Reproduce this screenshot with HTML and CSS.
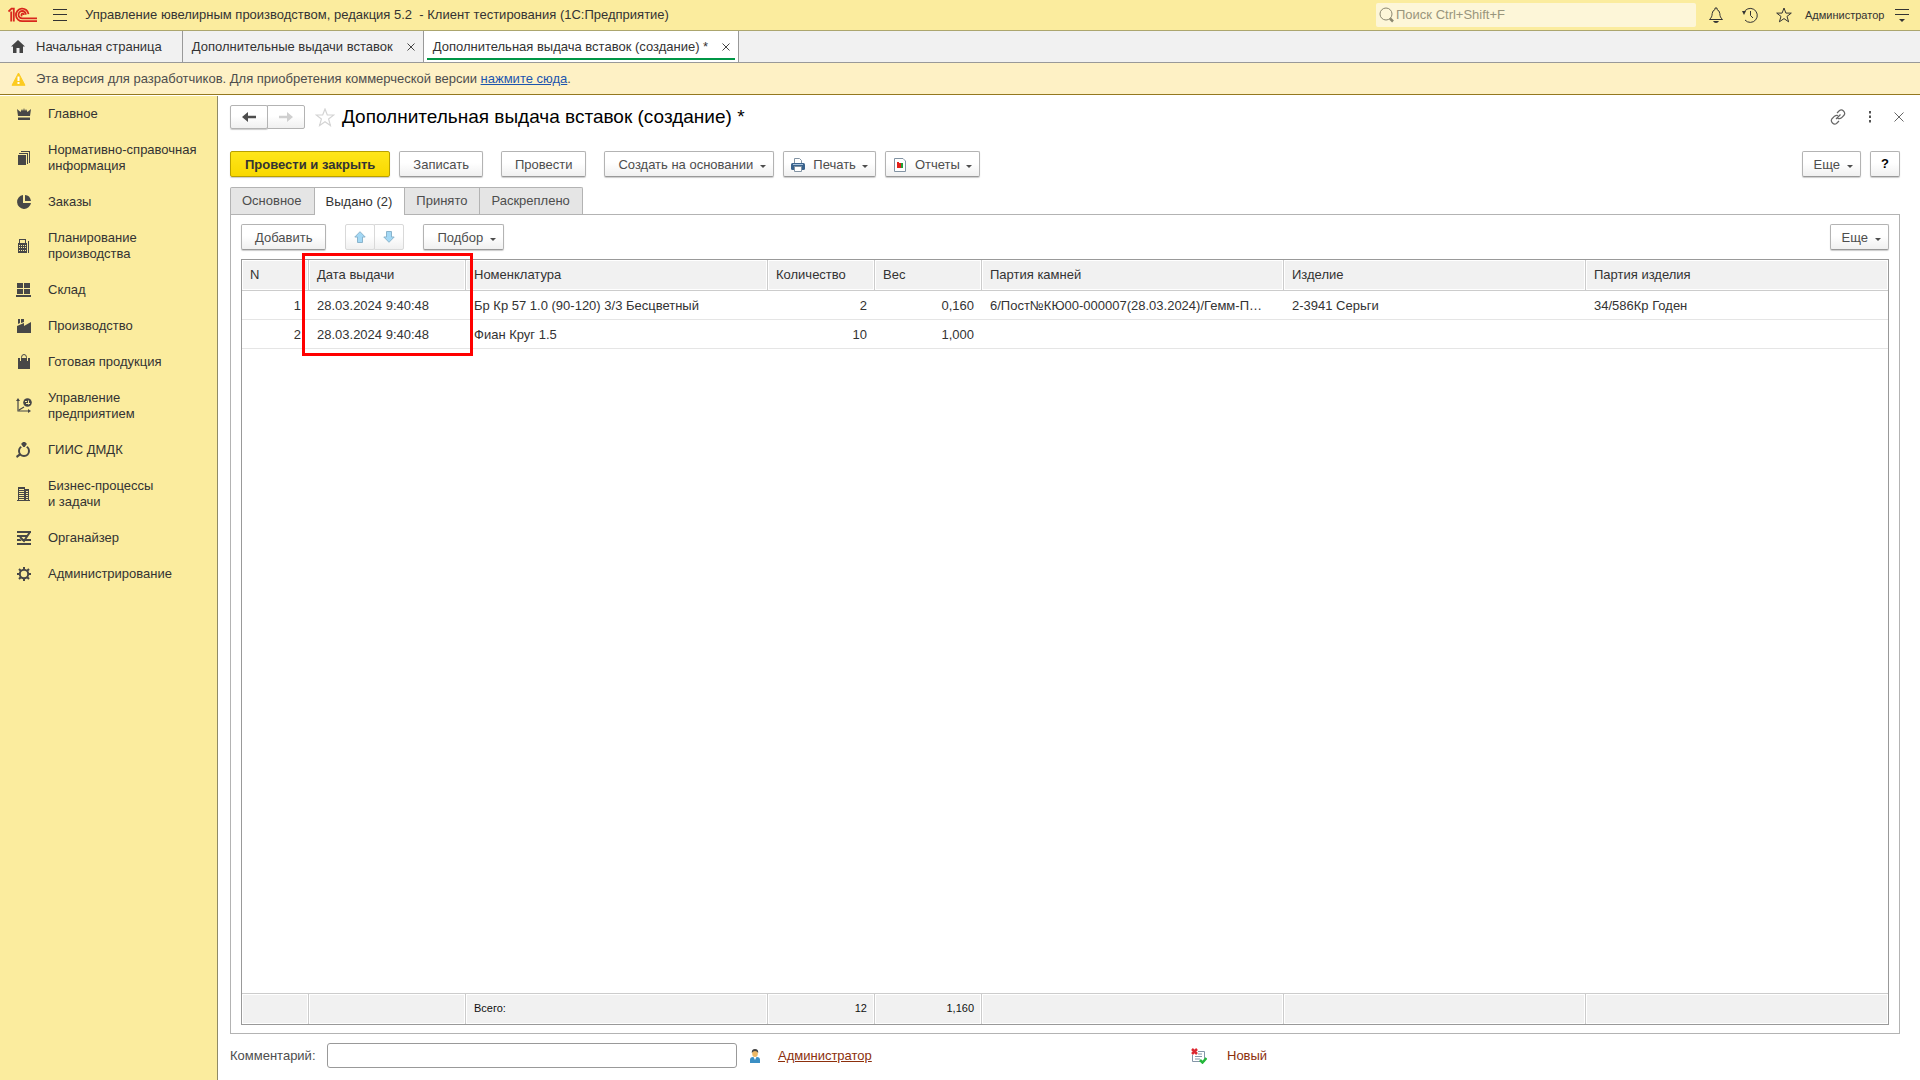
FILE: index.html
```html
<!DOCTYPE html>
<html lang="ru">
<head>
<meta charset="utf-8">
<title>Дополнительная выдача вставок (создание) *</title>
<link rel="stylesheet" href="styles.css">
</head>
<body>
<header class="topbar">
  <svg class="logo" width="30" height="16" viewBox="0 0 30 16" fill="none" stroke="#d9261c"><path stroke-width="1.8" d="M0.5 4.5L3.5 1.7H5.8V14.5M3.2 14.5V4.6"/><path stroke-width="1.8" d="M20.5 7.2A6.3 6.3 0 1 0 14.5 14.2H29M17.9 7.6A3.7 3.7 0 1 0 14.5 11.4H29M15.8 8A1.2 1.2 0 1 0 14.3 9"/></svg>
  <button class="icon-btn menu-btn" aria-label="Меню"><svg width="14" height="12" viewBox="0 0 14 12" stroke="#333" fill="none"><path d="M0 .5H14M0 5.5H14M0 11.5H14"/></svg></button>
  <div class="app-title">Управление ювелирным производством, редакция 5.2 &nbsp;- Клиент тестирования (1С:Предприятие)</div>
  <div class="search">
    <svg width="15" height="16" viewBox="0 0 15 16" fill="none" stroke="#8b8770"><circle cx="7" cy="7" r="6"/><path stroke-width="2.5" d="M11 11.5L14 14.5"/></svg>
    <input type="text" placeholder="Поиск Ctrl+Shift+F" aria-label="Поиск">
  </div>
  <div class="top-icons">
    <button class="icon-btn" aria-label="Оповещения"><svg width="16" height="16" viewBox="0 0 16 16" fill="none" stroke="#333"><path d="M1.5 12.5C3.5 10.5 4 9.5 4.2 6.5Q4.5 3.5 7 2.5V1H9V2.5Q11.5 3.5 11.8 6.5C12 9.5 12.5 10.5 14.5 12.5Z"/><path fill="#333" stroke="none" d="M5 14H11Q10 16 8 16T5 14"/></svg></button>
    <button class="icon-btn" aria-label="История"><svg width="16" height="16" viewBox="0 0 16 16" fill="none" stroke="#333"><path d="M1.7 6A7 7 0 1 1 3 13M8.5 4V8.5L11 11"/><path fill="#333" stroke="none" d="M0 4H4L2 8Z"/></svg></button>
    <button class="icon-btn" aria-label="Избранное"><svg width="16" height="16" viewBox="0 0 16 16" fill="none" stroke="#333"><path d="M8 1L9.9 6.1H15.3L11 9.4L12.6 14.8L8 11.6L3.4 14.8L5 9.4L.7 6.1H6.1Z"/></svg></button>
    <a class="user" href="#">Администратор</a>
    <button class="icon-btn" aria-label="Настройки"><svg width="14" height="14" viewBox="0 0 14 14" fill="none" stroke="#333"><path d="M0 1.5H14M0 6.5H14"/><path fill="#333" stroke="none" d="M4 11H10L7 14Z"/></svg></button>
  </div>
</header>

<nav class="windows">
  <a class="win home" href="#"><svg width="14" height="13" viewBox="0 0 14 13" fill="#444"><path d="M7 0L14 6.5H12V13H8.500V8H5.500V13H2V6.500H0Z"/></svg>Начальная страница</a>
  <div class="win"><a href="#">Дополнительные выдачи вставок</a><button class="icon-btn" aria-label="Закрыть"><svg width="8" height="8" viewBox="0 0 8 8" stroke="#444"><path d="M.5 .5L7.5 7.5M7.5 .5L.5 7.5"/></svg></button></div>
  <div class="win current"><a href="#">Дополнительная выдача вставок (создание) *</a><button class="icon-btn" aria-label="Закрыть"><svg width="8" height="8" viewBox="0 0 8 8" stroke="#444"><path d="M.5 .5L7.5 7.5M7.5 .5L.5 7.5"/></svg></button></div>
</nav>

<div class="notice">
  <svg width="15" height="14" viewBox="0 0 15 14"><path fill="#fccb20" stroke="#fccb20" stroke-linejoin="round" d="M7.5 1L14 13.300H1Z"/><path stroke="#fff" stroke-width="2" d="M7.5 4.5V9M7.5 10V12"/></svg>
  <p>Эта версия для разработчиков. Для приобретения коммерческой версии <a href="#">нажмите сюда</a>.</p>
</div>

<div class="workspace">
<nav class="sections">
  <a href="#"><svg width="16" height="16" viewBox="0 0 16 16"><path d="M1 3L4.5 6L6 3L7 5L8 2L9 5L10 3L11.5 6L15 3L14 10H2ZM2 11.5H14V14H2Z"/></svg>Главное</a>
  <a href="#"><svg width="16" height="16" viewBox="0 0 16 16"><path d="M2 5H10V15H2ZM3 3H12V14H11V4H3ZM5 1H14V13H13V2H5Z"/></svg>Нормативно-справочная информация</a>
  <a href="#"><svg width="16" height="16" viewBox="0 0 16 16"><path d="M7 1V9H15A7 7 0 1 1 7 1M9 1Q14 1 15 7H9Z"/></svg>Заказы</a>
  <a href="#"><svg width="16" height="16" viewBox="0 0 16 16"><path fill-rule="evenodd" d="M3 1H10V5H11V15H2V5H3ZM4 2V5H9V2ZM3 7V8H4V7ZM5 7V8H6V7ZM7 7V8H8V7ZM9 7V8H10V7ZM3 9V10H4V9ZM5 9V10H6V9ZM7 9V10H8V9ZM9 9V10H10V9ZM3 12V13H4V12ZM5 12V13H6V12ZM7 12V13H8V12ZM9 12V13H10V12ZM12 3H13V15H12Z"/></svg>Планирование производства</a>
  <a href="#"><svg width="16" height="16" viewBox="0 0 16 16"><path d="M1 1H7V6H1ZM8 1H14V6H8ZM1 7H7V12H1ZM8 7H14V12H8ZM0 13H15V15H0Z"/></svg>Склад</a>
  <a href="#"><svg width="16" height="16" viewBox="0 0 16 16"><path d="M2 1H4V5L2 6ZM5 1H8V4L5 5ZM1 8L8 5V8L15 4V15H1Z"/></svg>Производство</a>
  <a href="#"><svg width="16" height="16" viewBox="0 0 16 16"><path d="M2 4H14V15H2Z"/><path fill="none" stroke="#fbec9e" d="M4.500 7V3.500M11.500 7V3.500"/><path fill="none" stroke="#474747" d="M5.500 6V3.500Q5.500 .5 8 .5T10.500 3.500V6"/></svg>Готовая продукция</a>
  <a href="#"><svg width="16" height="16" viewBox="0 0 16 16"><path d="M2 0L0 3H4ZM15 13L12 11V15Z"/><path fill="none" stroke="#474747" stroke-width="1.2" d="M2 2V13H13M3 12L8 9"/><circle cx="11.5" cy="4.5" r="4.3"/><path fill="none" stroke="#fbec9e" d="M9 3.500H11M12.500 2.500V6.500M10 5.500H14"/></svg>Управление предприятием</a>
  <a href="#"><svg width="16" height="16" viewBox="0 0 16 16"><circle cx="8" cy="9" r="5" fill="none" stroke="#474747" stroke-width="2"/><path fill="none" stroke="#fbec9e" stroke-width="1.5" d="M4 2L8 7L12 2"/><path d="M5 2L7 0H9L11 2L8 5ZM0 14L4 11L5 13L1 16Z"/></svg>ГИИС ДМДК</a>
  <a href="#"><svg width="16" height="16" viewBox="0 0 16 16"><path fill-rule="evenodd" d="M2 1H9V3H13V14H14V15H1V14H2ZM3 3V4H8V3ZM3 5V6H8V5ZM3 7V8H8V7ZM3 9V10H8V9ZM3 11V12H8V11ZM3 13V14H8V13ZM10 5V6H12V5ZM10 7V8H12V7ZM10 9V10H12V9ZM10 11V12H12V11ZM10 13V14H12V13Z"/></svg>Бизнес-процессы<br>и задачи</a>
  <a href="#"><svg width="16" height="16" viewBox="0 0 16 16"><path d="M1 1H15V3H1ZM1 5H12V7H1ZM1 9H15V11H1ZM1 13H15V15H1Z"/><path fill="none" stroke="#fbec9e" d="M4 8L7 12L13 5"/><path fill="none" stroke="#474747" stroke-width="2" d="M4 7L8 11L14 2"/></svg>Органайзер</a>
  <a href="#"><svg width="16" height="16" viewBox="0 0 16 16"><circle cx="8" cy="8" r="4.2" fill="none" stroke="#474747" stroke-width="2"/><path fill="none" stroke="#474747" stroke-width="2" d="M8 1V4M8 12V15M1 8H4M12 8H15M3 3L5.2 5.2M10.8 10.8L13 13M13 3L10.8 5.2M5.2 10.8L3 13"/></svg>Администрирование</a>
</nav>

<main class="form">
  <div class="form-head">
    <div class="pair nav-pair">
      <button class="btn" aria-label="Назад"><svg width="14" height="10" viewBox="0 0 14 10"><path fill="#4d4d4d" d="M0 5L6 0V3.7H14V6.3H6V10Z"/></svg></button>
      <button class="btn" aria-label="Вперед" disabled><svg width="14" height="10" viewBox="0 0 14 10"><path fill="#cfcfcf" d="M14 5L8 0V3.7H0V6.3H8V10Z"/></svg></button>
    </div>
    <button class="icon-btn fav" aria-label="В избранное"><svg width="20" height="19" viewBox="0 0 20 19" fill="none" stroke="#d4d4d4" stroke-width="1.2"><path d="M10 1L12.3 7H18.8L13.6 11L15.4 17.5L10 13.7L4.6 17.5L6.4 11L1.2 7H7.7Z"/></svg></button>
    <h1>Дополнительная выдача вставок (создание) *</h1>
    <div class="head-tools">
      <button class="icon-btn" aria-label="Ссылка"><svg width="16" height="16" viewBox="0 0 16 16" fill="none" stroke="#666" stroke-width="1.2"><path d="M7 4L9.5 1.5Q11.5 0 13.5 2T14.2 6L11.5 8.8Q9.5 10.5 7.5 9M9 12L6.5 14.5Q4.5 16 2.5 14T1.8 10L4.5 7.2Q6 6 8 6.5M6 10L10.5 5.5"/></svg></button>
      <button class="icon-btn" aria-label="Еще действия"><svg width="4" height="12" viewBox="0 0 4 12" fill="#555"><path d="M1 0H3V2.5H1ZM1 4.5H3V7H1ZM1 9H3V11.5H1Z"/></svg></button>
      <button class="icon-btn" aria-label="Закрыть форму"><svg width="10" height="10" viewBox="0 0 10 10" stroke="#666"><path d="M.5 .5L9.5 9.5M9.5 .5L.5 9.5"/></svg></button>
    </div>
  </div>

  <div class="commands">
    <button class="btn primary">Провести и закрыть</button>
    <button class="btn">Записать</button>
    <button class="btn apart">Провести</button>
    <button class="btn drop apart">Создать на основании</button>
    <button class="btn drop pic"><svg width="14" height="14" viewBox="0 0 14 14"><path fill="#fff" stroke="#8293a3" d="M3.5 5V.5H8.5L10.5 2.5V5"/><rect y="5" width="14" height="7" rx="1.5" fill="#3a638d"/><path fill="#a9c3dc" d="M2 6H12V7H2Z"/><path fill="#fff" stroke="#8293a3" d="M3.5 8.5H10.5V13.5H3.5Z"/></svg>Печать</button>
    <button class="btn drop pic"><svg width="14" height="14" viewBox="0 0 14 14"><path fill="#fff" stroke="#8293a3" d="M1.5 .5H10L12.5 3V13.5H1.5Z"/><path fill="#e3211b" d="M4 4H6V10H4ZM6 5H8V10H6Z"/><path fill="#1fa33a" d="M8 5H10V10H8Z"/></svg>Отчеты</button>
    <button class="btn drop push">Еще</button>
    <button class="btn help">?</button>
  </div>

  <div class="tabs" role="tablist">
    <button role="tab">Основное</button>
    <button role="tab" class="active" aria-selected="true">Выдано (2)</button>
    <button role="tab">Принято</button>
    <button role="tab">Раскреплено</button>
  </div>

  <section class="panel">
    <div class="commands">
      <button class="btn">Добавить</button>
      <div class="pair move-pair">
        <button class="btn" aria-label="Вверх" disabled><svg width="12" height="12" viewBox="0 0 12 12"><path fill="#a3d8f5" stroke="#8ab4cc" d="M6 .7L11.2 6H8.5V11.5H3.5V6H.8Z"/></svg></button>
        <button class="btn" aria-label="Вниз" disabled><svg width="12" height="12" viewBox="0 0 12 12"><path fill="#a3d8f5" stroke="#8ab4cc" d="M6 11.3L11.2 6H8.5V.5H3.5V6H.8Z"/></svg></button>
      </div>
      <button class="btn drop">Подбор</button>
      <button class="btn drop push">Еще</button>
    </div>
    <div class="grid">
      <table>
        <colgroup><col class="c-n"><col class="c-date"><col><col class="c-num"><col class="c-num"><col><col><col></colgroup>
        <thead><tr><th>N</th><th>Дата выдачи</th><th>Номенклатура</th><th>Количество</th><th>Вес</th><th>Партия камней</th><th>Изделие</th><th>Партия изделия</th></tr></thead>
        <tbody>
          <tr><td class="num">1</td><td>28.03.2024 9:40:48</td><td>Бр Кр 57 1.0 (90-120) 3/3 Бесцветный</td><td class="num">2</td><td class="num">0,160</td><td>6/Пост№КЮ00-000007(28.03.2024)/Гемм-П…</td><td>2-3941 Серьги</td><td>34/586Кр Годен</td></tr>
          <tr><td class="num">2</td><td>28.03.2024 9:40:48</td><td>Фиан Круг 1.5</td><td class="num">10</td><td class="num">1,000</td><td></td><td></td><td></td></tr>
          <tr class="rest"><td colspan="8"></td></tr>
        </tbody>
        <tfoot><tr><td></td><td></td><td>Всего:</td><td class="num">12</td><td class="num">1,160</td><td></td><td></td><td></td></tr></tfoot>
      </table>
      <div class="highlight"></div>
    </div>
  </section>

  <footer class="form-foot">
    <label for="comment">Комментарий:</label>
    <input id="comment" type="text">
    <svg class="person" width="12" height="14" viewBox="0 0 12 14"><path fill="#3b8fc4" d="M1 14V11Q1 8 4 8H8Q11 8 11 11V14Z"/><path fill="#fff" d="M4.5 8H7.5L6 11Z"/><ellipse cx="6" cy="4.5" rx="2.8" ry="3.5" fill="#eeb865"/><path fill="#444" d="M2.8 4Q2.5 0 6 0T9.2 4Q8 2 6 2T2.8 4"/></svg>
    <a class="author" href="#">Администратор</a>
    <svg width="16" height="16" viewBox="0 0 16 16"><path fill="#fff" stroke="#8496a8" d="M1.5 7V13.5H13.5V3.5H7"/><path stroke="#8496a8" d="M7 6H11M4 8.5H11M4 11H9"/><path stroke="#dc2730" stroke-width="2.5" d="M1 1L6 6M6 1L1 6"/><path fill="none" stroke="#24b83b" stroke-width="2.5" d="M9 12L11.5 14.5L15.5 10"/></svg>
    <span class="status">Новый</span>
  </footer>
</main>
</div>
</body>
</html>
```
FILE: styles.css
```css
* { box-sizing: border-box; }

body {
  margin: 0;
  min-height: 100vh;
  display: flex;
  flex-direction: column;
  background: #fff;
  color: #333;
  font: 13px/16px "Liberation Sans", Arial, sans-serif;
}

a { color: inherit; text-decoration: none; }
svg { display: block; flex: none; }
button, input { font: inherit; color: inherit; }

.icon-btn {
  display: flex;
  align-items: center;
  justify-content: center;
  padding: 0;
  border: 0;
  background: none;
}

/* Top bar */
.topbar {
  display: flex;
  align-items: center;
  height: 31px;
  padding: 0 11px 0 8px;
  background: #fbec9e;
  border-bottom: 1px solid #aca66e;
}
.menu-btn { margin: 0 18px 0 15px; }
.app-title { flex: 1; white-space: nowrap; }
.search {
  display: flex;
  align-items: center;
  gap: 2px;
  width: 320px;
  height: 24px;
  padding-left: 3px;
  background: #fdf6d8;
  border-radius: 2px;
}
.search input {
  flex: 1;
  min-width: 0;
  padding: 0;
  border: 0;
  outline: 0;
  background: none;
}
.search input::placeholder { color: #99957c; opacity: 1; }
.top-icons { display: flex; align-items: center; gap: 18px; margin-left: 12px; }
.user { font-size: 11px; width: 78px; margin: 0 -6px 0 -5px; }

/* Open windows */
.windows {
  display: flex;
  height: 32px;
  background: #f1f1f1;
  border-bottom: 1px solid #999;
}
.win {
  display: flex;
  align-items: center;
  gap: 14px;
  padding: 0 8px 0 9px;
  border-right: 1px solid #999;
  white-space: nowrap;
}
.win.home { gap: 11px; padding: 0 20px 0 11px; }
.win.current {
  background: #fff;
  box-shadow: inset 3px 0 #fff, inset -3px 0 #fff, inset 0 -2px #fff, inset 0 -4px #009646;
}

/* Developer notice */
.notice {
  display: flex;
  align-items: center;
  gap: 10px;
  height: 32px;
  padding-left: 11px;
  background: #fef1c5;
  border-bottom: 1px solid #94781f;
  color: #4d4d4d;
}
.notice p { margin: 0; }
.notice a { color: #1c55ae; text-decoration: underline; }

.workspace { flex: 1; display: flex; }

/* Sections */
.sections {
  width: 218px;
  flex: none;
  margin-top: 1px;
  background: #fbec9e;
  border-right: 1px solid #8f8a66;
}
.sections a {
  display: flex;
  align-items: center;
  gap: 16px;
  padding: 10px 14px 10px 16px;
}
.sections svg { fill: #474747; }

/* Form */
.form {
  flex: 1;
  min-width: 0;
  display: flex;
  flex-direction: column;
  padding: 10px 20px 12px 12px;
}
.form-head { display: flex; align-items: center; height: 24px; margin-bottom: 22px; }
.form-head h1 { margin: 0; font-size: 19px; line-height: 24px; font-weight: 400; color: #000; }
.fav { margin: 0 7px 0 10px; }
.head-tools { display: flex; align-items: center; gap: 22px; margin: 0 -4px 0 auto; }

.btn {
  display: flex;
  align-items: center;
  justify-content: center;
  height: 26px;
  padding: 1px 13px 0;
  border: 1px solid #b3b3b3;
  border-bottom-color: #999;
  border-radius: 2px;
  background: linear-gradient(#fff 45%, #f0f0f0);
  box-shadow: 0 1px 1px #ccc;
  color: #4d4d4d;
  white-space: nowrap;
}
.btn.primary {
  padding: 1px 14px 0;
  border-color: #b8a000;
  background: linear-gradient(#ffe61a, #f8d800);
  color: #333;
  font-weight: 700;
}
.btn.drop { padding-right: 7px; }
.btn.drop::after {
  content: "";
  margin: 3px 0 0 7px;
  border: 3px solid transparent;
  border-top-color: #4d4d4d;
  border-bottom: 0;
}
.btn.pic { gap: 8px; padding-left: 7px; }
.btn.pic::after { margin-left: -2px; }
.btn.help { width: 30px; padding: 0; color: #000; font-weight: 700; }
.btn:disabled { border-color: #d9d9d9; box-shadow: none; }

.pair { display: flex; }
.pair .btn { padding: 0; }
.pair .btn + .btn { margin-left: -1px; border-radius: 0 2px 2px 0; }
.nav-pair .btn { width: 38px; height: 24px; border-color: #b3b3b3; }
.move-pair .btn { width: 30px; }

.commands { display: flex; gap: 9px; }
.commands .apart { margin-left: 9px; }
.commands .push { margin-left: auto; padding-left: 11px; }
.commands .move-pair { margin: 0 10px; }

.tabs { display: flex; margin-top: 10px; }
.tabs button {
  height: 27px;
  padding: 0 12px 0 11px;
  border: 1px solid #b3b3b3;
  border-bottom: 0;
  border-left-width: 0;
  background: #e5e5e5;
  color: #4d4d4d;
}
.tabs button:first-child { border-left-width: 1px; border-radius: 2px 0 0 0; }
.tabs button:last-child { border-radius: 0 2px 0 0; }
.tabs .active { background: #fff; height: 28px; margin-bottom: -1px; position: relative; color: #333; }

.panel {
  flex: 1;
  display: flex;
  flex-direction: column;
  padding: 9px 10px 8px;
  border: 1px solid #b3b3b3;
}
.panel .commands { margin-bottom: 9px; }

.grid {
  position: relative;
  flex: 1;
  display: grid;
  border: 1px solid #999;
}
.grid table {
  width: 100%;
  height: 100%;
  table-layout: fixed;
  border-collapse: separate;
  border-spacing: 0;
}
.c-n { width: 67px; }
.c-date { width: 157px; }
.c-num { width: 107px; }

th, td {
  padding: 0 8px;
  text-align: left;
  font-weight: 400;
  overflow: hidden;
  white-space: nowrap;
  text-overflow: ellipsis;
}
th, tfoot td {
  height: 31px;
  background: #f1f1f1;
  border-right: 1px solid #ccc;
  box-shadow: inset 0 0 0 1px #fff;
}
th { border-bottom: 1px solid #ccc; }
tbody td { height: 29px; padding-top: 1px; border-bottom: 1px solid #e5e5e5; }
tfoot td { padding: 0 7px 2px 8px; border-top: 1px solid #ccc; font-size: 11px; color: #111; }
th:last-child, tfoot td:last-child { border-right: 0; }
td.num { text-align: right; }
.rest td { height: auto; border: 0; }

.highlight {
  position: absolute;
  left: 60px;
  top: -7px;
  width: 171px;
  height: 103px;
  border: 3px solid #f00;
  pointer-events: none;
}

.form-foot { display: flex; align-items: center; margin-top: 9px; color: #4d4d4d; }
.form-foot label { width: 97px; }
.form-foot input {
  width: 410px;
  height: 25px;
  padding: 0 6px;
  border: 1px solid #999;
  border-radius: 3px;
  outline: 0;
}
.person { margin: 0 17px 0 12px; }
.author { width: 413px; color: #8c2f0c; text-decoration: underline; }
.status { margin-left: 20px; color: #8c2f0c; }
```
